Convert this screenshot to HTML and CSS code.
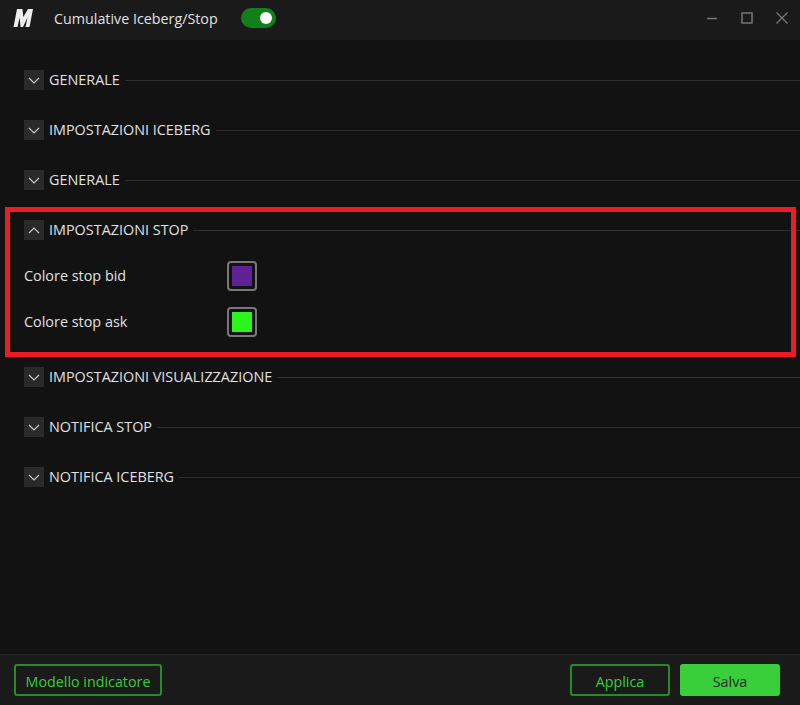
FILE: index.html
```html
<!DOCTYPE html>
<html lang="it">
<head>
    <meta charset="UTF-8">
    <title>Cumulative Iceberg/Stop</title>
    <link rel="stylesheet" href="styles.css">
</head>
<body>

<div class="window">
    <header class="titlebar">
        <svg class="logo" width="22" height="20" viewBox="0 0 22 20">
            <path d="M5 1h5.500l.8 8 4.700-8h5l-3.500 18h-4l2-9.500-4.500 9.500h-2.500l-.8-9.500-2.200 9.500H1.500z" fill="#eeeeee"/>
        </svg>
        <span class="title">Cumulative Iceberg/Stop</span>
        <div class="toggle"><span class="knob"></span></div>
        <div class="window-controls">
            <svg width="12" height="12" viewBox="0 0 12 12"><path d="M1 6.500h10" stroke="#777" stroke-width="1.500"/></svg>
            <svg width="12" height="12" viewBox="0 0 12 12"><rect x="1" y="1" width="10" height="10" fill="none" stroke="#777" stroke-width="1.500"/></svg>
            <svg width="12" height="12" viewBox="0 0 12 12"><path d="M.5.500l11 11M11.500.500l-11 11" stroke="#777" stroke-width="1.300"/></svg>
        </div>
    </header>

    <main class="content">
        <section class="section">
            <div class="section-head">
                <span class="chevron"><svg width="12" height="7" viewBox="0 0 12 7"><path d="M1 1l5 5 5-5" fill="none" stroke="#c8c8c8" stroke-width="1.200"/></svg></span>
                <span class="section-title">GENERALE</span>
                <span class="rule"></span>
            </div>
        </section>
        <section class="section">
            <div class="section-head">
                <span class="chevron"><svg width="12" height="7" viewBox="0 0 12 7"><path d="M1 1l5 5 5-5" fill="none" stroke="#c8c8c8" stroke-width="1.200"/></svg></span>
                <span class="section-title">IMPOSTAZIONI ICEBERG</span>
                <span class="rule"></span>
            </div>
        </section>
        <section class="section">
            <div class="section-head">
                <span class="chevron"><svg width="12" height="7" viewBox="0 0 12 7"><path d="M1 1l5 5 5-5" fill="none" stroke="#c8c8c8" stroke-width="1.200"/></svg></span>
                <span class="section-title">GENERALE</span>
                <span class="rule"></span>
            </div>
        </section>

        <section class="section open">
            <div class="section-head">
                <span class="chevron"><svg width="12" height="7" viewBox="0 0 12 7"><path d="M1 6l5-5 5 5" fill="none" stroke="#c8c8c8" stroke-width="1.200"/></svg></span>
                <span class="section-title">IMPOSTAZIONI STOP</span>
                <span class="rule"></span>
            </div>
            <div class="field">
                <label class="field-label">Colore stop bid</label>
                <span class="swatch"><span class="swatch-fill bid"></span></span>
            </div>
            <div class="field">
                <label class="field-label">Colore stop ask</label>
                <span class="swatch"><span class="swatch-fill ask"></span></span>
            </div>
            <div class="highlight"></div>
        </section>

        <section class="section">
            <div class="section-head">
                <span class="chevron"><svg width="12" height="7" viewBox="0 0 12 7"><path d="M1 1l5 5 5-5" fill="none" stroke="#c8c8c8" stroke-width="1.200"/></svg></span>
                <span class="section-title">IMPOSTAZIONI VISUALIZZAZIONE</span>
                <span class="rule"></span>
            </div>
        </section>
        <section class="section">
            <div class="section-head">
                <span class="chevron"><svg width="12" height="7" viewBox="0 0 12 7"><path d="M1 1l5 5 5-5" fill="none" stroke="#c8c8c8" stroke-width="1.200"/></svg></span>
                <span class="section-title">NOTIFICA STOP</span>
                <span class="rule"></span>
            </div>
        </section>
        <section class="section">
            <div class="section-head">
                <span class="chevron"><svg width="12" height="7" viewBox="0 0 12 7"><path d="M1 1l5 5 5-5" fill="none" stroke="#c8c8c8" stroke-width="1.200"/></svg></span>
                <span class="section-title">NOTIFICA ICEBERG</span>
                <span class="rule"></span>
            </div>
        </section>
    </main>

    <footer class="footer">
        <button class="button outline model">Modello indicatore</button>
        <div class="footer-right">
            <button class="button outline apply">Applica</button>
            <button class="button solid">Salva</button>
        </div>
    </footer>
</div>

</body>
</html>
```

FILE: styles.css
```css
* {
    box-sizing: border-box;
}
html, body {
    margin: 0;
    padding: 0;
    height: 100%;
    overflow: hidden;
}
body {
    font-family: 'Open Sans', 'Noto Sans', sans-serif;
    font-size: 14px;
    background-color: #121212;
    color: #e0e0e0;
}
.window {
    display: flex;
    flex-direction: column;
    height: 705px;
}
.titlebar {
    display: flex;
    align-items: center;
    height: 40px;
    padding: 0 0 4px 12px;
    background-color: #1a1a1a;
    flex-shrink: 0;
}
.logo {
    margin-right: 20px;
}
.title {
    font-size: 14.3px;
    color: #e0e0e0;
    width: 187px;
    white-space: nowrap;
}
.toggle {
    display: flex;
    align-items: center;
    justify-content: flex-end;
    width: 35px;
    height: 20px;
    padding-right: 4px;
    border-radius: 10px;
    background-color: #12801a;
}
.knob {
    width: 12px;
    height: 12px;
    border-radius: 50%;
    background-color: #fff;
}
.window-controls {
    display: flex;
    align-items: center;
    gap: 23px;
    margin-left: auto;
    padding-right: 12px;
}
.content {
    flex: 1;
    padding: 30px 0 0 24px;
}
.section {
    position: relative;
    margin-bottom: 30px;
}
.section-head {
    display: flex;
    align-items: center;
    height: 20px;
}
.chevron {
    display: flex;
    align-items: center;
    justify-content: center;
    width: 20px;
    height: 20px;
    margin-right: 5px;
    background-color: #2a2a2a;
}
.section-title {
    padding-bottom: 1px;
    font-size: 14.4px;
    color: #e0e0e0;
    white-space: nowrap;
}
.rule {
    flex: 1;
    height: 1px;
    margin-left: 5px;
    background-color: #2e2e2e;
}
.field {
    display: flex;
    align-items: center;
    height: 30px;
    margin-top: 16px;
}
.section-head + .field {
    margin-top: 21px;
}
.field-label {
    width: 203px;
    padding-bottom: 1px;
    font-size: 14.4px;
    color: #e0e0e0;
}
.swatch {
    display: flex;
    align-items: center;
    justify-content: center;
    width: 30px;
    height: 30px;
    border: 2px solid #777;
    border-radius: 4px;
}
.swatch-fill {
    width: 20px;
    height: 20px;
}
.bid {
    background-color: #5f2295;
}
.ask {
    background-color: #2cf51c;
}
.highlight {
    position: absolute;
    top: -13px;
    bottom: -20px;
    left: -19px;
    right: 4px;
    border: 5px solid #ed1c24;
    pointer-events: none;
}
.footer {
    display: flex;
    align-items: center;
    justify-content: space-between;
    height: 51px;
    padding: 0 20px 0 14px;
    background-color: #1a1a1a;
    border-top: 1px solid #262626;
    flex-shrink: 0;
}
.footer-right {
    display: flex;
    gap: 10px;
}
.button {
    height: 32px;
    padding: 3px 0 0;
    border-radius: 3px;
    font-family: inherit;
    font-size: 14.3px;
    cursor: pointer;
}
.outline {
    background-color: transparent;
    border: 2px solid #268a28;
    color: #38cc3a;
}
.solid {
    width: 100px;
    background-color: #38cf3b;
    border: none;
    color: #1c2a1c;
}
.model {
    width: 148px;
}
.apply {
    width: 100px;
}
```
